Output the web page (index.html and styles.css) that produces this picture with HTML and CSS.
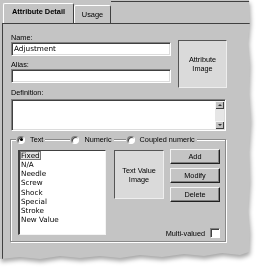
FILE: index.html
```html
<!DOCTYPE html>
<html>
<head>
<meta charset="utf-8">
<link rel="stylesheet" href="styles.css">
</head>
<body>
<div class="shadow">
  <div class="paper">
    <div class="tabs">
      <div class="tab active">Attribute Detail</div>
      <div class="tab">Usage</div>
      <div class="tabfill"></div>
    </div>
    <div class="page">
      <div class="top">
        <div class="fields">
          <div class="lbl">Name:</div>
          <div class="input">Adjustment</div>
          <div class="lbl alias">Alias:</div>
          <div class="input"></div>
        </div>
        <div class="imgbox attr">Attribute<br>Image</div>
      </div>
      <div class="lbl def">Definition:</div>
      <div class="textarea">
        <div class="tafill"></div>
        <div class="scroll">
          <div class="sbtn"><span class="arr up"></span></div>
          <div class="track"></div>
          <div class="sbtn"><span class="arr down"></span></div>
        </div>
      </div>
      <div class="group">
        <div class="radios">
          <div class="radio r1"><span class="dot checked"></span><span>Text</span></div>
          <div class="radio r2"><span class="dot"></span><span>Numeric</span></div>
          <div class="radio r3"><span class="dot"></span><span>Coupled numeric</span></div>
        </div>
        <div class="gbody">
          <div class="list">
            <div class="item sel"><span>Fixed</span></div>
            <div class="item">N/A</div>
            <div class="item">Needle</div>
            <div class="item">Screw</div>
            <div class="item">Shock</div>
            <div class="item">Special</div>
            <div class="item">Stroke</div>
            <div class="item">New Value</div>
          </div>
          <div class="imgbox tv">Text Value<br>Image</div>
          <div class="btncol">
            <div class="btn">Add</div>
            <div class="btn">Modify</div>
            <div class="btn">Delete</div>
            <div class="multi"><span>Multi-valued</span><span class="check"></span></div>
          </div>
        </div>
      </div>
    </div>
  </div>
</div>
</body>
</html>
```

FILE: styles.css
```css
* { box-sizing: border-box; }
html, body { margin: 0; padding: 0; background: #fff; }
body {
  width: 265px;
  height: 267px;
  overflow: hidden;
  font-family: "Liberation Sans", Arial, sans-serif;
  font-size: 7.3px;
  color: #000;
}
.shadow {
  width: 256px;
  height: 264px;
  filter: drop-shadow(1px 3px 2px rgba(0,0,0,0.35));
}
.paper {
  width: 254px;
  height: 262px;
  background: #c4c4c4;
  clip-path: polygon(0 0, 249px 0, 250px 20px, 248px 42px, 250px 64px, 249px 92px, 251px 120px, 249px 150px, 250px 180px, 248px 210px, 250px 232px, 249px 252px, 240px 255px, 222px 253px, 204px 256px, 184px 254px, 162px 257px, 140px 255px, 120px 258px, 100px 256px, 80px 258px, 60px 256px, 40px 259px, 20px 257px, 0 259px);
}
.tabs {
  display: flex;
  align-items: flex-end;
  height: 23px;
  padding-left: 3px;
}
.tab {
  height: 18px;
  border-top: 1px solid #fff;
  border-left: 1px solid #fff;
  border-right: 1px solid #404040;
  border-radius: 2px 2px 0 0;
  display: flex;
  align-items: center;
  justify-content: center;
  font-size: 7.4px;
  width: 37px;
  padding-bottom: 1px;
}
.tab.active {
  height: 20px;
  width: 71px;
  font-weight: bold;
  font-size: 7.4px;
  padding-bottom: 4px;
}
.tabfill {
  flex: 1;
  align-self: flex-start;
  margin-top: 1px;
  border-top: 1px solid #404040;
}
.page {
  margin-left: 2px;
  border-top: 1px solid #404040;
  border-left: 1px solid #404040;
  padding: 9px 0 0 8px;
  height: 240px;
}
.top {
  display: grid;
  grid-template-columns: 160px 49px;
  column-gap: 7px;
}
.lbl {
  height: 9px;
  line-height: 9px;
}
.alias { margin-top: 4px; }
.input {
  height: 14px;
  background: #fff;
  border-top: 1px solid #808080;
  border-left: 1px solid #808080;
  border-right: 1px solid #fff;
  border-bottom: 1px solid #fff;
  box-shadow: inset 1px 1px 0 #404040, inset -1px -1px 0 #dcdcdc;
  font-family: "DejaVu Sans", Verdana, sans-serif;
  font-size: 7.3px;
  line-height: 12px;
  padding-left: 2px;
}
.imgbox {
  background: #dadada;
  border-top: 1px solid #555;
  border-left: 1px solid #555;
  border-right: 1px solid #eee;
  border-bottom: 1px solid #eee;
  display: flex;
  align-items: center;
  justify-content: center;
  text-align: center;
  line-height: 9px;
}
.attr { margin-top: 7px; height: 48px; }
.def { margin-bottom: 2px; }
.textarea {
  width: 215px;
  height: 32px;
  background: #fff;
  border-top: 1px solid #808080;
  border-left: 1px solid #808080;
  border-right: 1px solid #fff;
  border-bottom: 1px solid #fff;
  box-shadow: inset 1px 1px 0 #404040, inset -1px -1px 0 #dcdcdc;
  padding: 1px;
  display: flex;
}
.tafill { flex: 1; }
.scroll {
  width: 9px;
  display: flex;
  flex-direction: column;
}
.sbtn {
  height: 8px;
  background: #c4c4c4;
  box-shadow: inset 1px 1px 0 #f4f4f4, inset -1px -1px 0 #404040;
  display: flex;
  align-items: center;
  justify-content: center;
}
.track {
  flex: 1;
  background: #e6e6e6;
}
.arr {
  width: 0;
  height: 0;
  border-left: 2px solid transparent;
  border-right: 2px solid transparent;
}
.arr.up { border-bottom: 2px solid #333; }
.arr.down { border-top: 2px solid #333; }
.group {
  margin-top: 8px;
  margin-left: -1px;
  width: 216px;
  height: 103px;
  border: 1px solid #8a8a8a;
  box-shadow: inset 1px 1px 0 #fff, 1px 1px 0 #fff;
  padding-bottom: 6px;
}
.radios {
  display: flex;
  height: 9px;
  margin-top: -5px;
  padding-left: 5px;
}
.radio {
  display: flex;
  align-items: center;
  gap: 5px;
  padding: 0 2px 0 1px;
  background: #c4c4c4;
  line-height: 9px;
}
.r2 { margin-left: 25px; }
.r3 { margin-left: 12px; }
.dot {
  width: 8px;
  height: 8px;
  border-radius: 50%;
  background: #fff;
  border: 1px solid;
  border-color: #808080 #fff #fff #808080;
  box-shadow: inset 1px 1px 0 #404040;
  display: flex;
  align-items: center;
  justify-content: center;
}
.dot.checked::after {
  content: "";
  width: 3px;
  height: 3px;
  border-radius: 50%;
  background: #000;
}
.gbody {
  display: flex;
  margin-top: 6px;
  padding-left: 7px;
}
.list {
  width: 88px;
  height: 85px;
  background: #fff;
  border-top: 1px solid #404040;
  border-left: 2px solid #404040;
  border-right: 1px solid #f4f4f4;
  border-bottom: 1px solid #f4f4f4;
  padding: 0 0 0 1px;
  font-family: "DejaVu Sans", Verdana, sans-serif;
  font-size: 7.2px;
}
.item {
  height: 9.15px;
  line-height: 9.15px;
  white-space: nowrap;
}
.item.sel span {
  display: inline-block;
  background: #e4e4e4;
  outline: 1px solid #777;
  outline-offset: -1px;
  padding: 0 1px;
  margin-left: -1px;
  height: 9px;
  line-height: 9px;
}
.tv {
  margin-left: 8px;
  width: 50px;
  height: 49px;
}
.btncol {
  margin-left: 6px;
  width: 50px;
  margin-top: -1px;
  margin-bottom: -3px;
  display: flex;
  flex-direction: column;
  gap: 4px;
}
.btn {
  height: 15px;
  background: #c4c4c4;
  border-top: 1px solid #f4f4f4;
  border-left: 1px solid #f4f4f4;
  border-right: 1px solid #202020;
  border-bottom: 1px solid #202020;
  box-shadow: inset -1px -1px 0 #808080;
  display: flex;
  align-items: center;
  justify-content: center;
}
.multi {
  margin-top: auto;
  display: flex;
  justify-content: flex-end;
  align-items: center;
  gap: 5px;
  white-space: nowrap;
  height: 10px;
}
.check {
  flex: none;
  width: 10px;
  height: 10px;
  background: #fff;
  border: 1px solid;
  border-color: #808080 #fff #fff #808080;
  box-shadow: inset 1px 1px 0 #404040;
}
```
